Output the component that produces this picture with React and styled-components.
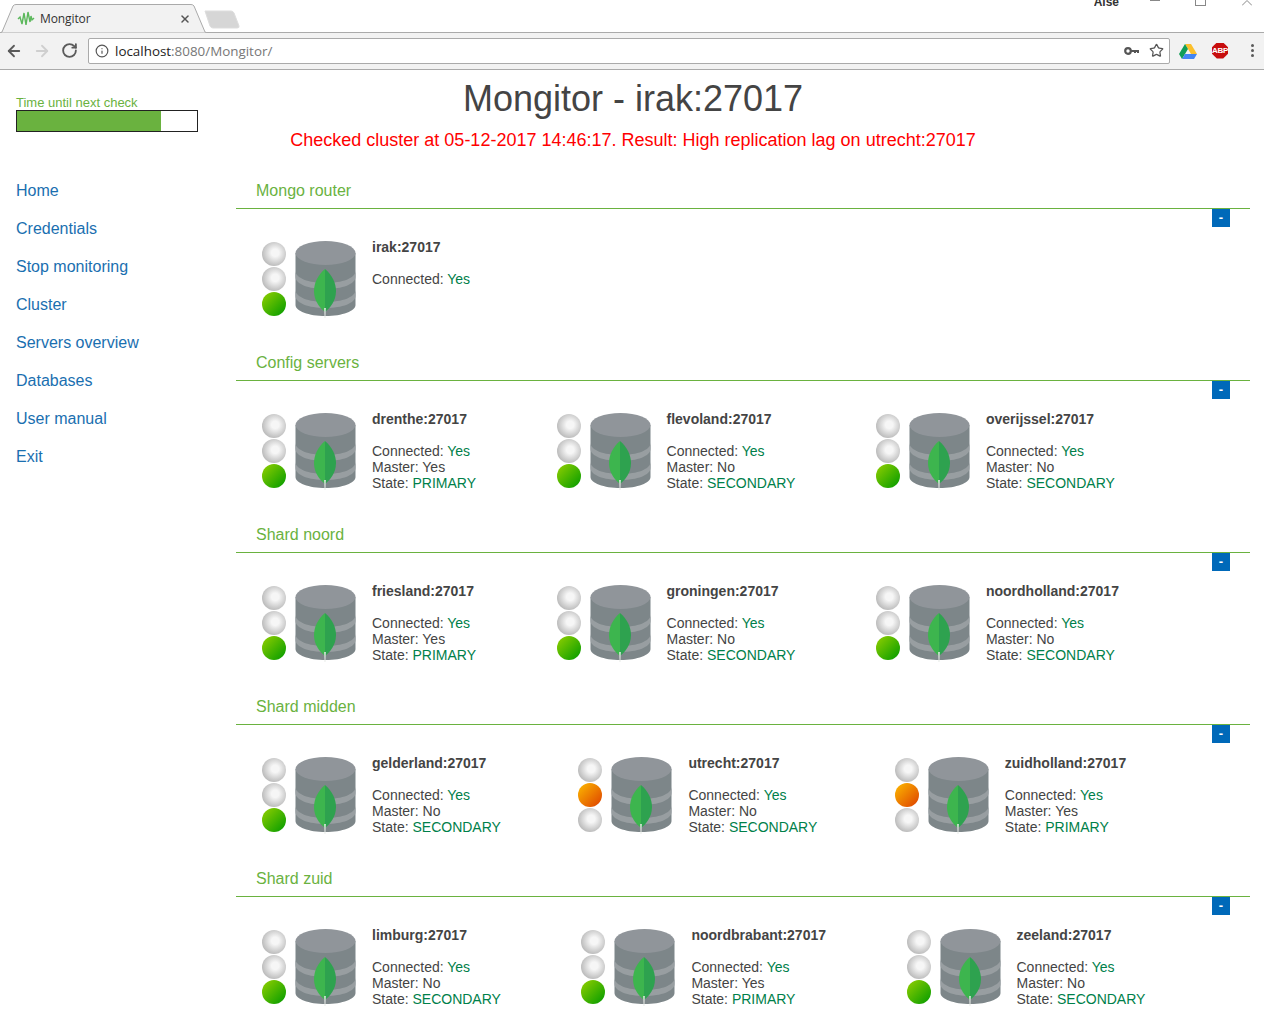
import React from "react";
import styled, { createGlobalStyle } from "styled-components";
import { ArrowLeft, ArrowRight, RotateCw, Info, Star, X } from "lucide-react";

const GlobalStyle = createGlobalStyle`
  html, body {
    margin: 0;
    padding: 0;
    height: 1024px;
    overflow: hidden;
    background: #fff;
  }
  body {
    font-family: "Liberation Sans", Arial, sans-serif;
    color: #444;
  }
`;

const GREEN = "#6ab23f";

const Browser = styled.div`
  height: 70px;
  box-sizing: border-box;
  font-family: "Open Sans", "Noto Sans", sans-serif;
`;

const TabStrip = styled.div`
  height: 33px;
  box-sizing: border-box;
  border-bottom: 1px solid #aaa;
  display: flex;
  overflow: visible;
  position: relative;
`;

const TabShape = styled.svg`
  position: absolute;
  left: 0;
  top: 4px;
`;

const Tab = styled.div`
  position: relative;
  width: 196px;
  height: 29px;
  margin-top: 4px;
  padding: 0 5px 0 17px;
  box-sizing: border-box;
  display: flex;
  align-items: center;
  font-size: 12px;
  letter-spacing: -0.1px;
  color: #333;
`;

const TabTitle = styled.span`
  margin-left: 5px;
  flex: 1;
`;

const NewTab = styled.svg`
  position: absolute;
  left: 203px;
  top: 10px;
`;

const WindowControls = styled.div`
  margin-left: auto;
  display: flex;
  align-items: flex-start;
  height: 12px;
  overflow: hidden;
`;

const UserName = styled.div`
  font-family: "Liberation Sans", sans-serif;
  font-size: 12px;
  font-weight: bold;
  line-height: 12px;
  margin-top: -4px;
  margin-right: 31px;
  color: #333;
  text-shadow: 0 0 1px #fff;
`;

const MinButton = styled.div`
  width: 10px;
  height: 1px;
  margin-right: 35px;
  background: #888;
`;

const MaxButton = styled.div`
  width: 9px;
  height: 5px;
  margin-right: 36px;
  border: 1px solid #888;
  border-top: none;
`;

const CloseButton = styled.svg`
  margin-right: 12px;
`;

const Toolbar = styled.div`
  height: 37px;
  box-sizing: border-box;
  background: #f2f2f2;
  border-bottom: 1px solid #aaa;
  display: flex;
  align-items: center;
  padding: 0 0 1px 5px;
`;

const NavButton = styled.div`
  width: 28px;
  height: 20px;
  display: flex;
  align-items: center;
  color: ${(p) => p.$color || "#5a5a5a"};
`;

const UrlBox = styled.div`
  width: 1082px;
  height: 26px;
  margin-left: -1px;
  box-sizing: border-box;
  background: #fff;
  border: 1px solid #aaa;
  border-radius: 2px;
  display: flex;
  align-items: center;
  padding: 0 5px 0 6px;
  font-size: 13.4px;
  color: #777;
`;

const UrlHost = styled.span`
  color: #222;
  margin-left: 6px;
`;

const UrlPath = styled.span`
  flex: 1;
`;

const KeyIcon = styled.svg`
  margin-right: 9px;
`;

const Extensions = styled.div`
  flex: 1;
  display: flex;
  align-items: center;
  padding-left: 9px;
`;

const AbpIcon = styled.div`
  width: 16px;
  height: 16px;
  margin-left: 15px;
  background: #c70d0d;
  clip-path: polygon(30% 0, 70% 0, 100% 30%, 100% 70%, 70% 100%, 30% 100%, 0 70%, 0 30%);
  color: #fff;
  font-family: "Liberation Sans", sans-serif;
  font-size: 8px;
  font-weight: bold;
  line-height: 16px;
  text-align: center;
  letter-spacing: -0.3px;
`;

const Dots = styled.div`
  margin-left: 23px;
  display: flex;
  flex-direction: column;
  gap: 2px;
`;

const Dot = styled.div`
  width: 3px;
  height: 3px;
  border-radius: 50%;
  background: #5a5a5a;
`;

const Page = styled.div`
  display: grid;
  grid-template-columns: 236px 1fr;
  grid-template-rows: 98px auto;
  padding-right: 14px;
`;

const Header = styled.header`
  grid-column: 1 / -1;
  grid-row: 1;
  text-align: center;
  padding: 6px 0 0 16px;
`;

const Title = styled.h1`
  margin: 0;
  font-size: 36px;
  font-weight: normal;
  line-height: 45px;
  color: #444;
`;

const Status = styled.div`
  margin-top: 8px;
  font-size: 18px;
  line-height: 22px;
  color: #f00;
`;

const Sidebar = styled.aside`
  grid-column: 1;
  grid-row: 1 / span 2;
  padding: 25px 0 0 16px;
  position: relative;
`;

const TimerLabel = styled.div`
  font-size: 13px;
  line-height: 15px;
  color: ${GREEN};
`;

const Timer = styled.div`
  width: 182px;
  height: 22px;
  box-sizing: border-box;
  border: 1px solid #222;
  background: #fff;
`;

const TimerFill = styled.div`
  height: 100%;
  background: ${GREEN};
`;

const Nav = styled.nav`
  margin-top: 40px;
  display: flex;
  flex-direction: column;
`;

const NavLink = styled.a`
  height: 38px;
  line-height: 38px;
  font-size: 16px;
  color: #1a6fb0;
  text-decoration: none;
`;

const Main = styled.main`
  grid-column: 2;
  grid-row: 2;
`;

const Section = styled.section`
  height: 172px;
`;

const SectionTitle = styled.h2`
  margin: 0;
  padding: 13px 0 0 20px;
  height: 41px;
  box-sizing: border-box;
  font-size: 16px;
  font-weight: normal;
  line-height: 20px;
  color: ${GREEN};
  border-bottom: 1px solid ${GREEN};
`;

const CollapseRow = styled.div`
  display: flex;
  justify-content: flex-end;
  padding-right: 20px;
`;

const CollapseButton = styled.button`
  width: 18px;
  height: 18px;
  padding: 0;
  border: none;
  background: #0069b9;
  color: #fff;
  font-family: "Liberation Sans", sans-serif;
  font-size: 13px;
  font-weight: bold;
  line-height: 18px;
  text-align: center;
`;

const Servers = styled.div`
  display: flex;
  gap: ${(p) => p.$gap || 80.5}px;
  padding: 13px 0 0 26px;
`;

const Server = styled.div`
  display: flex;
  align-items: flex-start;
`;

const Lights = styled.div`
  display: flex;
  flex-direction: column;
  gap: 1px;
  padding-top: 2px;
  margin-right: 9px;
`;

const LIGHT_COLOURS = {
  off: "radial-gradient(circle at 55% 45%, #f6f6f6 20%, #b8b8b8 75%)",
  green: "linear-gradient(135deg, #94d000, #009a00)",
  orange: "linear-gradient(135deg, #fdbb00, #dd3f00)",
};

const Light = styled.div`
  width: 24px;
  height: 24px;
  border-radius: 50%;
  background: ${(p) => LIGHT_COLOURS[p.$colour]};
`;

const DbIcon = styled.svg`
  flex: none;
  display: block;
  margin-top: 1px;
`;

const Details = styled.div`
  margin: -1px 0 0 16px;
  font-size: 14px;
  line-height: 16px;
  white-space: nowrap;
`;

const Name = styled.div`
  font-weight: bold;
  margin-bottom: 16px;
  color: #444;
`;

const Value = styled.span`
  color: #00804a;
`;

const NAV_ITEMS = [
  "Home",
  "Credentials",
  "Stop monitoring",
  "Cluster",
  "Servers overview",
  "Databases",
  "User manual",
  "Exit",
];

const SECTIONS = [
  {
    title: "Mongo router",
    servers: [{ name: "irak:27017", router: true, light: 2 }],
  },
  {
    title: "Config servers",
    servers: [
      { name: "drenthe:27017", master: "Yes", state: "PRIMARY", light: 2 },
      { name: "flevoland:27017", master: "No", state: "SECONDARY", light: 2 },
      { name: "overijssel:27017", master: "No", state: "SECONDARY", light: 2 },
    ],
  },
  {
    title: "Shard noord",
    servers: [
      { name: "friesland:27017", master: "Yes", state: "PRIMARY", light: 2 },
      { name: "groningen:27017", master: "No", state: "SECONDARY", light: 2 },
      { name: "noordholland:27017", master: "No", state: "SECONDARY", light: 2 },
    ],
  },
  {
    title: "Shard midden",
    gap: 77.5,
    servers: [
      { name: "gelderland:27017", master: "No", state: "SECONDARY", light: 2 },
      { name: "utrecht:27017", master: "No", state: "SECONDARY", light: 1 },
      { name: "zuidholland:27017", master: "Yes", state: "PRIMARY", light: 1 },
    ],
  },
  {
    title: "Shard zuid",
    servers: [
      { name: "limburg:27017", master: "No", state: "SECONDARY", light: 2 },
      { name: "noordbrabant:27017", master: "Yes", state: "PRIMARY", light: 2 },
      { name: "zeeland:27017", master: "No", state: "SECONDARY", light: 2 },
    ],
  },
];

const Database = () => (
  <DbIcon width="61" height="78" viewBox="0 0 61 78">
    <path d="M0.5 12v52c0 6 13 11 30 11s30-5 30-11V12z" fill="#7d8689" />
    <path d="M0.5 30c0 7 13 12 30 12s30-5 30-12v6c0 7-13 12-30 12S0.5 43 0.5 36z" fill="#989ea1" />
    <path d="M0.5 49c0 7 13 12 30 12s30-5 30-12v6c0 7-13 12-30 12S0.5 62 0.5 55z" fill="#989ea1" />
    <ellipse cx="30.5" cy="12" rx="30" ry="12" fill="#90959a" />
    <path d="M30 28C23 34 19 42 19 50c0 10 6 17 11 21z" fill="#3db54e" />
    <path d="M30 28c7 6 11 14 11 22 0 10-6 17-11 21z" fill="#2ea24f" />
    <path d="M29.2 67h1.6l-.4 10h-.8z" fill="#e4e8e4" />
  </DbIcon>
);

const ServerCard = ({ server }) => (
  <Server>
    <Lights>
      {[0, 1, 2].map((i) => (
        <Light
          key={i}
          $colour={i !== server.light ? "off" : i === 1 ? "orange" : "green"}
        />
      ))}
    </Lights>
    <Database />
    <Details>
      <Name>{server.name}</Name>
      <div>
        Connected: <Value>Yes</Value>
      </div>
      {!server.router && (
        <>
          <div>Master: {server.master}</div>
          <div>
            State: <Value>{server.state}</Value>
          </div>
        </>
      )}
    </Details>
  </Server>
);

const BrowserChrome = () => (
  <Browser>
    <TabStrip>
      <TabShape width="207" height="29" viewBox="0 0 207 29">
        <path
          d="M0 29 L2 28 L13 2 Q14 0.5 16 0.5 H191 Q193 0.5 194 2 L205 28 L207 29 Z"
          fill="#f2f2f2"
          stroke="#aaa"
        />
      </TabShape>
      <NewTab width="37" height="20" viewBox="0 0 37 20">
        <path
          d="M2 1 H28 Q30 1 31 3 L36 16 Q36.5 18 34 18 H10 Q8 18 7 16 Z"
          fill="#d6d6d6"
          stroke="#ddd"
        />
      </NewTab>
      <Tab>
        <svg width="18" height="17" viewBox="0 0 18 17">
          <polyline
            points="1,9 3,7 5,14 7,3 9,15 11,2 13,12 14,6 15,10 17,8"
            fill="none"
            stroke="#5cb85c"
            strokeWidth="1.4"
          />
        </svg>
        <TabTitle>Mongitor</TabTitle>
        <X size={12} strokeWidth={3} color="#555" />
      </Tab>
      <WindowControls>
        <UserName>Alse</UserName>
        <MinButton />
        <MaxButton />
        <CloseButton width="10" height="6" viewBox="0 0 10 6">
          <path d="M0 5.5 L5 0.5 L10 5.5" fill="none" stroke="#888" />
        </CloseButton>
      </WindowControls>
    </TabStrip>
    <Toolbar>
      <NavButton>
        <ArrowLeft size={18} strokeWidth={2.4} />
      </NavButton>
      <NavButton $color="#cfcfcf">
        <ArrowRight size={18} strokeWidth={2.4} />
      </NavButton>
      <NavButton>
        <RotateCw size={17} strokeWidth={2.6} />
      </NavButton>
      <UrlBox>
        <Info size={14} strokeWidth={2} color="#555" />
        <UrlHost>localhost</UrlHost>
        <UrlPath>:8080/Mongitor/</UrlPath>
        <KeyIcon width="16" height="10" viewBox="0 0 16 10">
          <circle cx="4" cy="5" r="2.8" fill="none" stroke="#555" strokeWidth="2.2" />
          <path d="M7 4h8v3h-2V6h-1v1h-2V6H7z" fill="#555" />
        </KeyIcon>
        <Star size={15} strokeWidth={2} color="#555" />
      </UrlBox>
      <Extensions>
        <svg width="18" height="16" viewBox="0 0 18 16">
          <path d="M6 1h6l6 10h-6z" fill="#fbc02d" />
          <path d="M6 1l3 5-6 10-3-5z" fill="#0f9d58" />
          <path d="M3 16l3-5h12l-3 5z" fill="#4285f4" />
        </svg>
        <AbpIcon>ABP</AbpIcon>
        <Dots>
          <Dot />
          <Dot />
          <Dot />
        </Dots>
      </Extensions>
    </Toolbar>
  </Browser>
);

const App = () => (
  <>
    <GlobalStyle />
    <BrowserChrome />
    <Page>
      <Header>
        <Title>Mongitor - irak:27017</Title>
        <Status>
          Checked cluster at 05-12-2017 14:46:17. Result: High replication lag on utrecht:27017
        </Status>
      </Header>
      <Sidebar>
        <TimerLabel>Time until next check</TimerLabel>
        <Timer>
          <TimerFill style={{ width: "80%" }} />
        </Timer>
        <Nav>
          {NAV_ITEMS.map((item) => (
            <NavLink key={item} href="#">
              {item}
            </NavLink>
          ))}
        </Nav>
      </Sidebar>
      <Main>
        {SECTIONS.map((section) => (
          <Section key={section.title}>
            <SectionTitle>{section.title}</SectionTitle>
            <CollapseRow>
              <CollapseButton>-</CollapseButton>
            </CollapseRow>
            <Servers $gap={section.gap}>
              {section.servers.map((server) => (
                <ServerCard key={server.name} server={server} />
              ))}
            </Servers>
          </Section>
        ))}
      </Main>
    </Page>
  </>
);

export default App;
